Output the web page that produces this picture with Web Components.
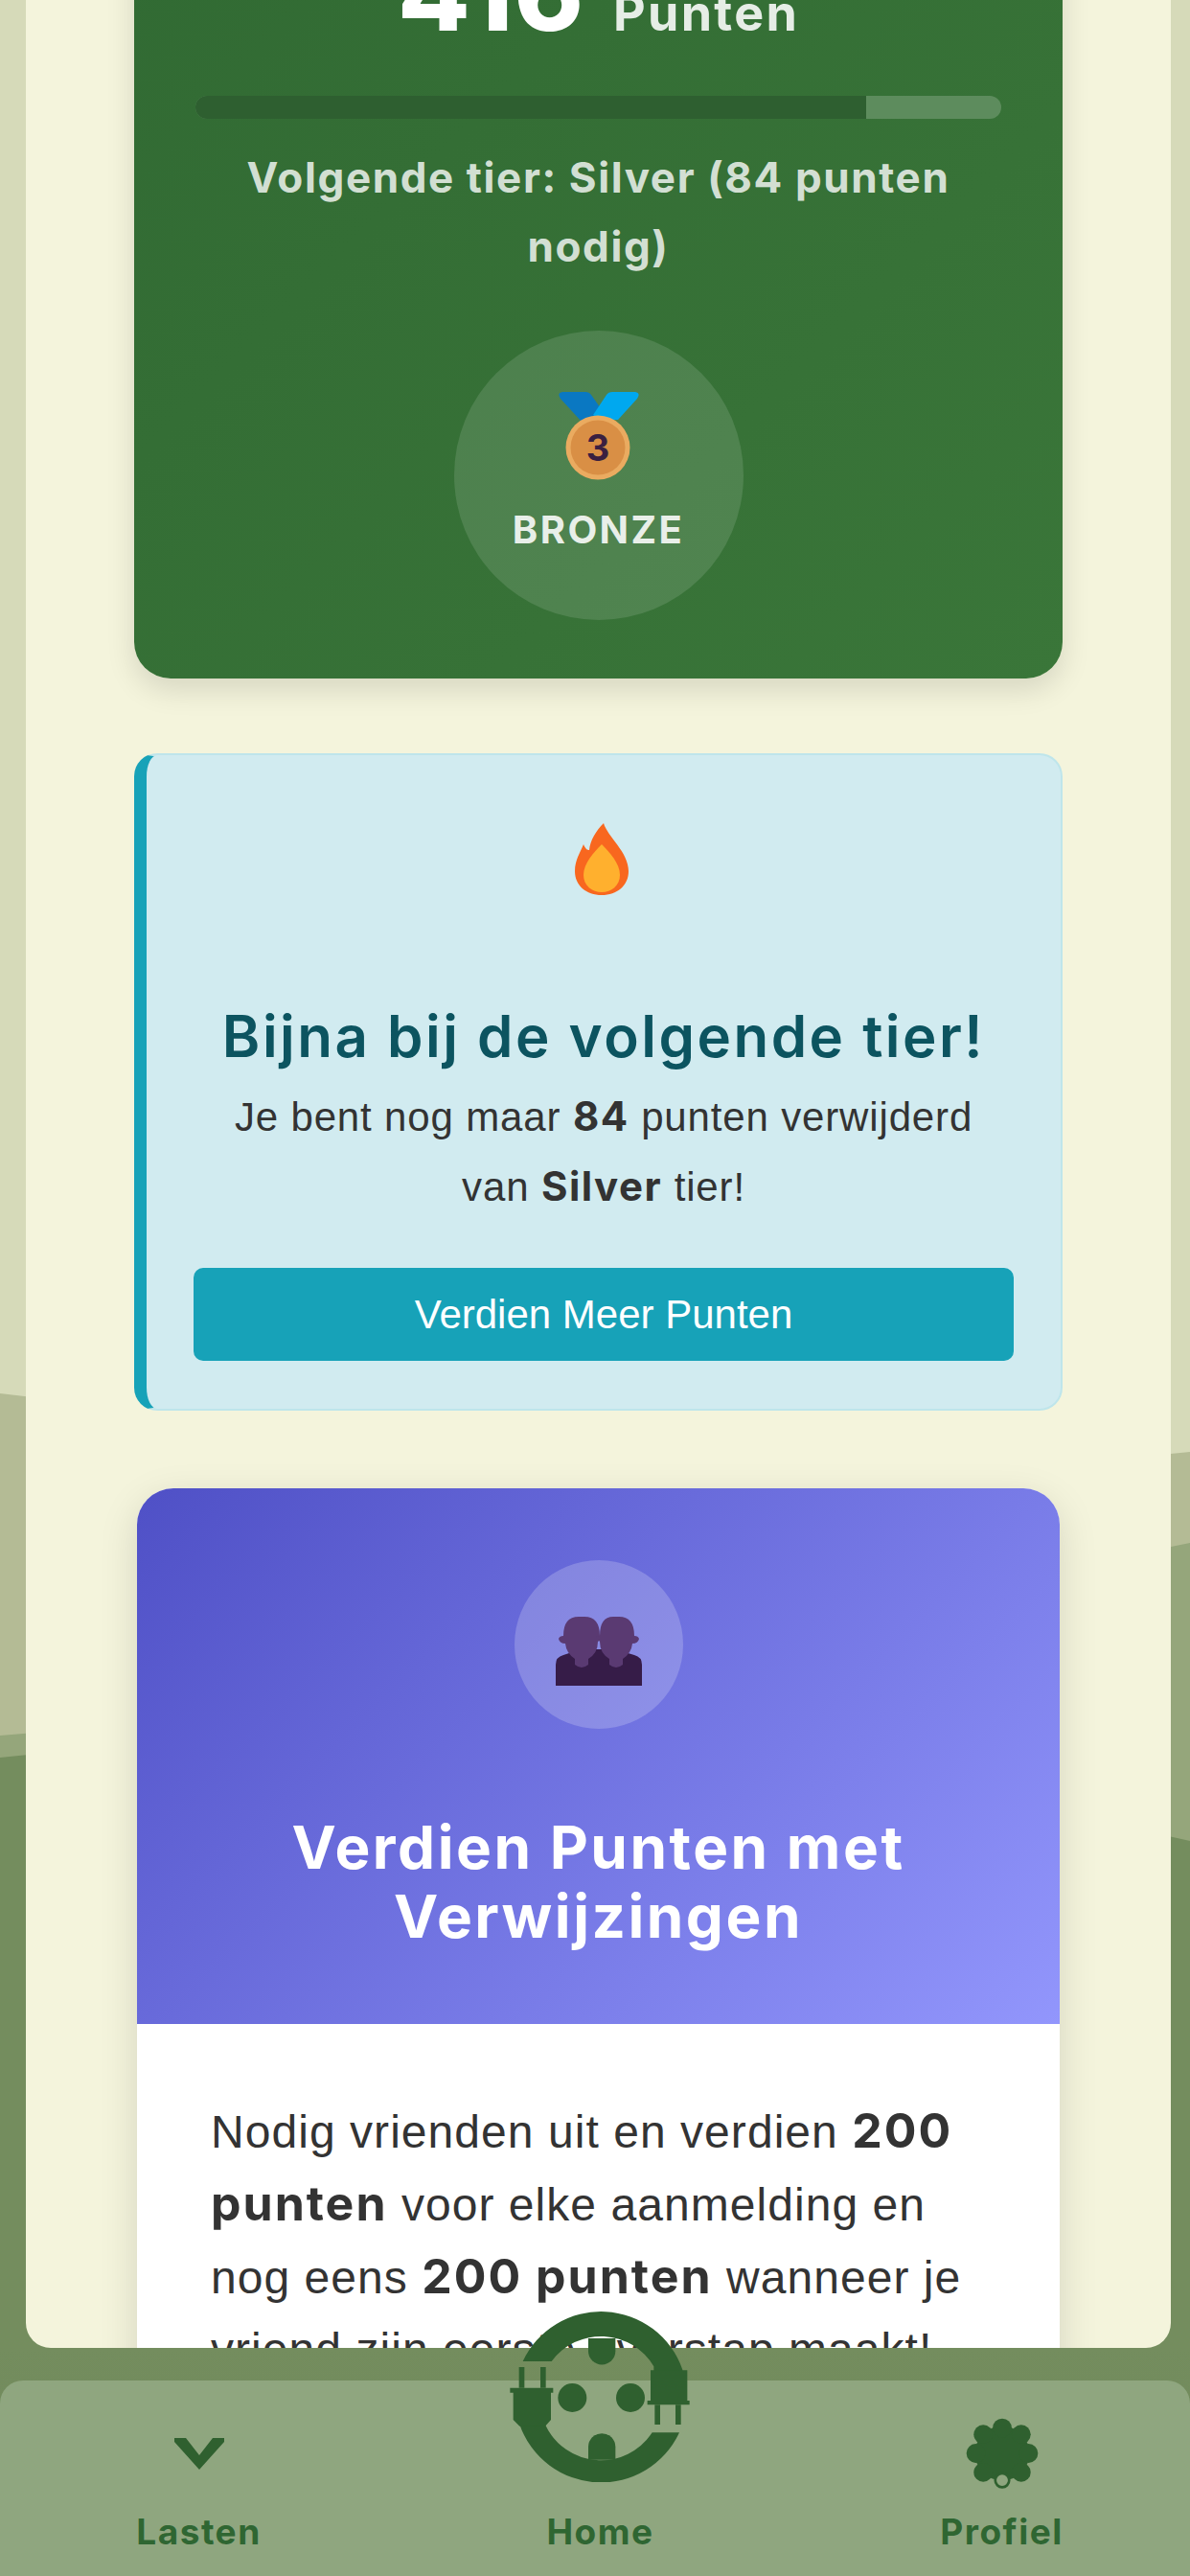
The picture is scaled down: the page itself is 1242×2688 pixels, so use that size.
<!DOCTYPE html>
<html lang="nl">
<head>
<meta charset="utf-8">
<title>Punten</title>
<style>
  html, body { margin: 0; padding: 0; height: 100%; overflow: hidden; }
  body { font-family: "Liberation Sans", Arial, sans-serif; color: #333; }
  strong { font-family: Inter, "Liberation Sans", sans-serif; font-weight: 700; }
  tier-alert strong { letter-spacing: 1.5px; }
  referral-card strong { font-size: 50px; letter-spacing: 2px; }
</style>
</head>
<body>
<app-shell>
  <points-card points="416" label="Punten" progress="83.2" tier="BRONZE">Volgende tier: Silver (84 punten nodig)</points-card>
  <tier-alert heading="Bijna bij de volgende tier!" action="Verdien Meer Punten">
    Je bent nog maar <strong>84</strong> punten verwijderd van <strong>Silver</strong> tier!
  </tier-alert>
  <referral-card heading="Verdien Punten met Verwijzingen">
    Nodig vrienden uit en verdien <strong>200 punten</strong> voor elke aanmelding en nog eens <strong>200 punten</strong> wanneer je vriend zijn eerste overstap maakt!
  </referral-card>
  <bottom-nav slot="nav">
    <nav-item label="Lasten" icon="chevron"></nav-item>
    <nav-item label="Home" icon="plug"></nav-item>
    <nav-item label="Profiel" icon="clover"></nav-item>
  </bottom-nav>
</app-shell>

<script>
const heading = 'Inter, "Liberation Sans", sans-serif';

class AppShell extends HTMLElement {
  constructor() {
    super();
    this.attachShadow({ mode: 'open' });
    this.shadowRoot.innerHTML = `
      <style>
        :host { display: flex; flex-direction: column; position: relative; width: 1242px; height: 2688px; overflow: hidden; background: #d6dab9; }
        .hills { position: absolute; inset: 0; }
        .panel {
          position: relative; height: 2450px; box-sizing: border-box; margin: 0 20px 0 27px;
          padding: 0 113px; background: #f4f4dc; border-radius: 0 0 26px 26px; overflow: hidden;
        }
        .nav { position: relative; flex: 1; display: block; }
      </style>
      <svg class="hills" viewBox="0 0 1242 2688" aria-hidden="true">
        <path d="M0 1454C400 1500 800 1560 1242 1515V2688H0Z" fill="#b4bb95"/>
        <path d="M0 1811C400 1780 800 1700 1242 1610V2688H0Z" fill="#95a67b"/>
        <path d="M0 1834C400 1790 800 1820 1242 1921V2688H0Z" fill="#748d5e"/>
      </svg>
      <div class="panel"><slot></slot></div>
      <slot class="nav" name="nav"></slot>
    `;
  }
}

class PointsCard extends HTMLElement {
  constructor() {
    super();
    this.attachShadow({ mode: 'open' });
    this.shadowRoot.innerHTML = `
      <style>
        :host {
          display: block; margin-top: -113px; padding: 40px 64px 61px; color: #fff;
          background: linear-gradient(135deg, #316a33, #3a7639); border-radius: 0 0 38px 38px;
          box-shadow: 0 12px 30px rgba(0,0,0,.12); font-family: ${heading};
        }
        .total { display: flex; justify-content: center; align-items: baseline; gap: 30px; height: 130px; line-height: 130px; font-weight: 700; margin-bottom: 43px; }
        .num { font-size: 110px; font-weight: 800; letter-spacing: 1px; }
        .label { font-size: 52px; letter-spacing: 2.3px; color: rgba(255,255,255,.88); }
        .bar { height: 24px; border-radius: 12px; background: #5d8c5d; overflow: hidden; }
        .fill { height: 100%; background: #2e5f30; }
        .next { margin: 25px auto 52px; max-width: 800px; text-align: center; font-size: 44px; line-height: 72px; font-weight: 700; letter-spacing: 1.6px; color: rgba(255,255,255,.8); }
        .badge {
          width: 302px; height: 302px; margin: 0 auto; padding-bottom: 8px; box-sizing: border-box; border-radius: 50%;
          background: rgba(255,255,255,.12); display: flex; flex-direction: column; align-items: center; justify-content: center; gap: 29px;
        }
        .tier { font-size: 40px; line-height: 46px; font-weight: 700; letter-spacing: 2.4px; color: rgba(255,255,255,.88); }
        svg { display: block; }
      </style>
      <div class="total"><span class="num"></span><span class="label"></span></div>
      <div class="bar"><div class="fill"></div></div>
      <div class="next"><slot></slot></div>
      <div class="badge">
        <svg width="84" height="92" viewBox="0 0 84 92" aria-hidden="true">
          <path d="M4 0H28Q32 0 34 3L46 20 38 29 24 31 2 7Q-2 1 4 0Z" fill="#0a78c2"/>
          <path d="M80 0H56Q52 0 50 3L36 24 42 29 62 29 82 7Q86 1 80 0Z" fill="#00a8ef"/>
          <circle cx="41" cy="58" r="33.500" fill="#eaab60"/>
          <circle cx="41" cy="58" r="28.500" fill="#d98f45"/>
          <text x="41" y="72" text-anchor="middle" font-family="Inter, sans-serif" font-weight="700" font-size="38" fill="#3a2040">3</text>
        </svg>
        <span class="tier"></span>
      </div>
    `;
  }

  connectedCallback() {
    const root = this.shadowRoot;
    root.querySelector('.num').textContent = this.getAttribute('points');
    root.querySelector('.label').textContent = this.getAttribute('label');
    root.querySelector('.tier').textContent = this.getAttribute('tier');
    root.querySelector('.fill').style.width = this.getAttribute('progress') + '%';
  }
}

class TierAlert extends HTMLElement {
  constructor() {
    super();
    this.attachShadow({ mode: 'open' });
    this.shadowRoot.innerHTML = `
      <style>
        :host {
          display: block; margin-top: 78px; padding: 71px 49px 50px; text-align: center; color: #333;
          background: #d1ebf0; border: 2px solid #bee5eb; border-left: 13px solid #17a2b8; border-radius: 24px;
        }
        svg { display: block; margin: 0 auto 113px; transform: translateX(-2px); }
        h2 { margin: 0 0 14px; font: 600 60px/68px ${heading}; letter-spacing: 2.5px; color: #0c5460; white-space: nowrap; }
        p { margin: 0 20px 48px; font-size: 42px; line-height: 72px; letter-spacing: .85px; }
        button {
          display: block; width: 100%; height: 97px; padding: 0; border: 0; border-radius: 10px;
          background: #17a2b8; color: #fff; font: 42px "Liberation Sans", Arial, sans-serif;
        }
      </style>
      <svg width="56" height="75" viewBox="0 0 56 75" aria-hidden="true">
        <path d="M30 0C34 14 56 30 56 50 56 65 44 75 28 75 12 75 0 65 0 50 0 38 6 30 9 22 11 27 13 28 15 28 16 18 22 8 30 0Z" fill="#f8671f"/>
        <path d="M28 22C36 30 47 42 47 54 47 65 38 72 28 72 18 72 9 65 9 54 9 42 20 30 28 22Z" fill="#ffb02e"/>
      </svg>
      <h2></h2>
      <p><slot></slot></p>
      <button type="button"></button>
    `;
  }

  connectedCallback() {
    this.shadowRoot.querySelector('h2').textContent = this.getAttribute('heading');
    this.shadowRoot.querySelector('button').textContent = this.getAttribute('action');
  }
}

class ReferralCard extends HTMLElement {
  constructor() {
    super();
    this.attachShadow({ mode: 'open' });
    this.shadowRoot.innerHTML = `
      <style>
        :host {
          display: block; margin: 81px 3px 0; background: #fff; border-radius: 38px 38px 0 0;
          box-shadow: 0 12px 40px rgba(0,0,0,.13);
        }
        header {
          padding: 75px 60px 76px; border-radius: 38px 38px 0 0; text-align: center; color: #fff;
          background: linear-gradient(135deg, #4f50c6, #9296fc);
        }
        .circle { width: 176px; height: 176px; margin: 0 auto 88px; border-radius: 50%; background: rgba(255,255,255,.2); display: flex; align-items: center; justify-content: center; }
        .circle svg { margin-top: 14px; }
        h2 { margin: 0; font: 700 62px/72px ${heading}; letter-spacing: 2.5px; }
        .body { padding: 74px 77px; font-size: 48px; line-height: 75px; letter-spacing: 1.05px; color: #333; }
      </style>
      <header>
        <div class="circle">
          <svg width="90" height="72" viewBox="0 0 90 72" aria-hidden="true">
            <path d="M0 72V50Q0 42 8 40L26 34H62L82 40Q90 42 90 50V72Z" fill="#361c48"/>
            <path d="M8 20Q8 0 24 0H30Q46 0 46 20L50 21 44 26Q44 38 34 44V50Q27 56 20 50V44Q11 38 10 28 4 28 3 23 4 20 8 20Z" fill="#5a3a72"/>
            <path d="M82 20Q82 0 66 0H60Q46 0 46 20L42 21 46 26Q46 38 56 44V50Q63 56 70 50V44Q79 38 80 28 86 28 87 23 86 20 82 20Z" fill="#5a3a72"/>
          </svg>
        </div>
        <h2></h2>
      </header>
      <div class="body"><slot></slot></div>
    `;
  }

  connectedCallback() {
    this.shadowRoot.querySelector('h2').textContent = this.getAttribute('heading');
  }
}

class BottomNav extends HTMLElement {
  constructor() {
    super();
    this.attachShadow({ mode: 'open' });
    this.shadowRoot.innerHTML = `
      <style>
        :host { display: block; height: 238px; padding-top: 34px; box-sizing: border-box; background: linear-gradient(#748d5e, #6d8659); }
        .bar { height: 204px; background: #8fa67f; border-radius: 24px 24px 0 0; }
        .items { display: grid; grid-template-columns: repeat(3, 419px); margin-left: -2px; }
      </style>
      <div class="bar"><div class="items"><slot></slot></div></div>
    `;
  }
}

const navIcons = {
  chevron: `<svg width="52" height="33" viewBox="0 0 52 33"><path d="M0 0H12L26 18 40 0H52V4L26 33 0 4Z" fill="#2f602f"/></svg>`,
  clover: `<svg width="76" height="76" viewBox="140 0 230 230"><g fill="#2f602f"><circle cx="255" cy="115" r="86"/><circle cx="255" cy="35" r="30"/><circle cx="195" cy="55" r="30"/><circle cx="315" cy="55" r="30"/><circle cx="172" cy="115" r="30"/><circle cx="338" cy="115" r="30"/><circle cx="195" cy="175" r="30"/><circle cx="315" cy="175" r="30"/></g><circle cx="255" cy="200" r="22" fill="#8fa67f" stroke="#2f602f" stroke-width="8"/></svg>`,
  plug: `<svg class="over" width="240" height="200" viewBox="0 0 720 600"><g fill="#2f602f">
    <path d="M140 222A270 270 0 0 1 640 248V270H550V238A192 192 0 0 0 230 222Z"/>
    <path d="M130 420A270 270 0 0 0 630 445H545A192 192 0 0 1 210 420Z"/>
    <path d="M345 150H430V190A42 42 0 0 1 345 190Z"/>
    <path d="M345 530V490A42 42 0 0 1 430 490V530Z"/>
    <circle cx="295" cy="336" r="45"/><circle cx="477" cy="336" r="45"/>
    <path d="M540 250H655V345H662V358H530V345H540Z"/>
    <path d="M553 358H570V420H553ZM618 358H635V420H618Z"/>
    <path d="M100 305H235V320H228V405L210 425H130L110 405V320H100Z"/>
    <path d="M128 240H145V305H128ZM195 240H212V305H195Z"/>
  </g></svg>`
};

class NavItem extends HTMLElement {
  constructor() {
    super();
    this.attachShadow({ mode: 'open' });
    this.shadowRoot.innerHTML = `
      <style>
        :host { display: flex; flex-direction: column; align-items: center; position: relative; padding-top: 36px; }
        .icon { height: 80px; display: flex; align-items: center; justify-content: center; }
        .label { margin-top: 20px; font: 700 37px/44px ${heading}; letter-spacing: 1.5px; color: #2f6632; }
        .over { position: absolute; left: 50%; top: -94px; margin-left: -128px; }
        svg { display: block; }
      </style>
      <div class="icon"></div>
      <span class="label"></span>
    `;
  }

  connectedCallback() {
    this.shadowRoot.querySelector('.label').textContent = this.getAttribute('label');
    this.shadowRoot.querySelector('.icon').innerHTML = navIcons[this.getAttribute('icon')];
  }
}

customElements.define('app-shell', AppShell);
customElements.define('points-card', PointsCard);
customElements.define('tier-alert', TierAlert);
customElements.define('referral-card', ReferralCard);
customElements.define('bottom-nav', BottomNav);
customElements.define('nav-item', NavItem);
</script>
</body>
</html>
